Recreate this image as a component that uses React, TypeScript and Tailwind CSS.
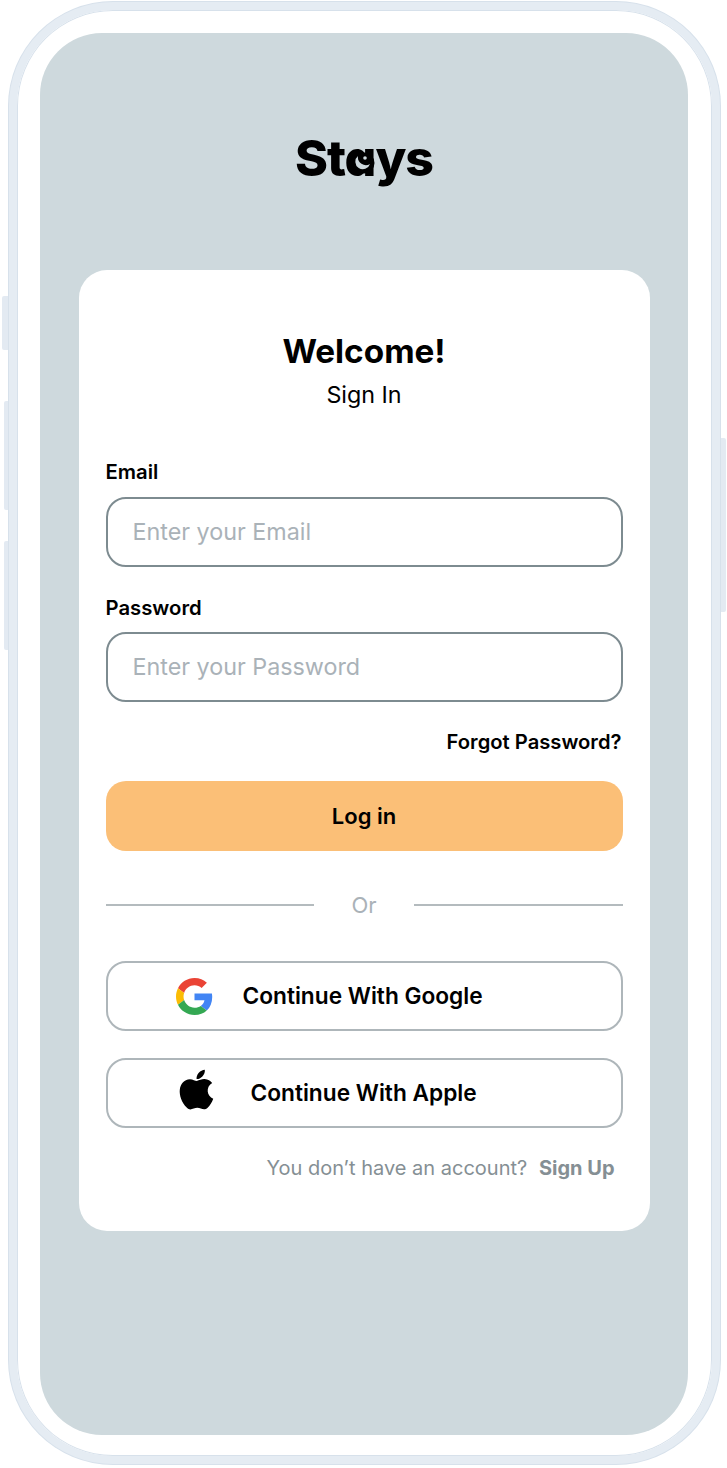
const SANS = "font-['Inter','Liberation_Sans',sans-serif]";

function GoogleIcon() {
  return (
    <svg width="37" height="37" viewBox="0 0 48 48">
      <path fill="#EA4335" d="M24 9.5c3.54 0 6.71 1.22 9.21 3.6l6.85-6.85C35.9 2.38 30.47 0 24 0 14.62 0 6.51 5.38 2.56 13.22l7.98 6.19C12.43 13.72 17.74 9.5 24 9.5z" />
      <path fill="#4285F4" d="M46.98 24.55c0-1.57-.15-3.09-.38-4.55H24v9.02h12.94c-.58 2.96-2.26 5.48-4.78 7.18l7.73 6c4.51-4.18 7.09-10.36 7.09-17.65z" />
      <path fill="#FBBC05" d="M10.53 28.59c-.48-1.45-.76-2.99-.76-4.59s.27-3.14.76-4.59l-7.98-6.19C.92 16.46 0 20.12 0 24c0 3.88.92 7.54 2.56 10.78l7.97-6.19z" />
      <path fill="#34A853" d="M24 48c6.48 0 11.93-2.13 15.89-5.81l-7.73-6c-2.15 1.45-4.92 2.3-8.16 2.3-6.26 0-11.57-4.22-13.47-9.91l-7.98 6.19C6.51 42.62 14.62 48 24 48z" />
    </svg>
  );
}

function AppleIcon() {
  return (
    <svg width="53" height="53" viewBox="0 0 24 24" fill="#000">
      <path d="M17.05 20.28c-.98.95-2.05.8-3.08.35-1.09-.46-2.09-.48-3.24 0-1.44.62-2.2.44-3.06-.35C2.79 15.25 3.51 7.59 9.05 7.31c1.35.07 2.29.74 3.08.8 1.18-.24 2.31-.93 3.57-.84 1.51.12 2.65.72 3.4 1.8-3.12 1.87-2.38 5.98.48 7.13-.57 1.5-1.31 2.99-2.54 4.09zM12.03 7.25c-.15-2.23 1.66-4.07 3.74-4.25.29 2.58-2.34 4.5-3.74 4.25z" />
    </svg>
  );
}

function Field({ label, placeholder, labelGap }: { label: string; placeholder: string; labelGap: string }) {
  return (
    <div>
      <div className={`${labelGap} text-[20.3px] leading-[23px] font-semibold text-black`}>{label}</div>
      <div className="flex h-[70px] items-center rounded-[20px] border-2 border-[#7d8b90] pl-[25px] text-[23.3px] text-[#aab2b8]">
        {placeholder}
      </div>
    </div>
  );
}

function SocialButton({ icon, label, iconW, gap }: { icon: React.ReactNode; label: string; iconW: string; gap: string }) {
  return (
    <div className="flex h-[70px] items-center rounded-[20px] border-2 border-[#aeb6ba] text-[22.7px] font-semibold text-black">
      <div className={iconW}>{icon}</div>
      <span className={`${gap} pt-[1px]`}>{label}</span>
    </div>
  );
}

export default function App() {
  return (
    <div className={`relative h-[1468px] w-[727px] overflow-hidden bg-white pt-[2px] pl-[9px] ${SANS}`}>
      {/* side buttons */}
      <div className="absolute top-[296px] left-[2px] h-[54px] w-[6px] rounded-l-[2px] bg-[#e3eaf2]" />
      <div className="absolute top-[401px] left-[4px] h-[109px] w-[4px] rounded-l-[2px] bg-[#e3eaf2]" />
      <div className="absolute top-[541px] left-[4px] h-[109px] w-[4px] rounded-l-[2px] bg-[#e3eaf2]" />
      <div className="absolute top-[438px] left-[721px] h-[174px] w-[5px] rounded-r-[2px] bg-[#e3eaf2]" />

      <div className="h-[1462px] w-[711px] rounded-[104px] border-[8px] border-[#e5ecf3] bg-white px-[23px] pt-[23px] shadow-[0_0_0_1px_#d7e1eb,inset_0_0_0_1px_#d7e1eb]">
        <div className="flex h-[1402px] w-[648px] flex-col items-center rounded-[62px] bg-[#ced9dd]">
          <div className="relative mt-[91px] text-[50px] leading-[68px] font-extrabold tracking-[-1px] text-black [font-feature-settings:'cv11']">
            Stays
            {/* moon cut into the a's bowl */}
            <svg className="absolute top-[26px] left-[56px]" width="24" height="26" viewBox="0 0 24 26">
              <circle cx="13" cy="13" r="10.5" fill="#000" />
              <path fill="#ced9dd" d="M7 6A7.5 7.5 0 1 0 19 14A8 8 0 0 1 7 6z" />
              <circle cx="14" cy="8" r="1.8" fill="#ced9dd" />
            </svg>
          </div>

          <div className="mt-[78px] h-[961px] w-[571px] rounded-[28px] bg-white px-[27px] pt-[62px]">
            <div className="text-center text-[33.3px] leading-[39px] font-bold text-black">Welcome!</div>
            <div className="mt-[10px] text-center text-[23.3px] leading-[28px] text-black">Sign In</div>

            <div className="mt-[51px] flex flex-col gap-[29px]">
              <Field label="Email" placeholder="Enter your Email" labelGap="mb-[14px]" />
              <Field label="Password" placeholder="Enter your Password" labelGap="mb-[13px]" />
            </div>

            <div className="mt-[29px] pr-[1px] text-right text-[20.2px] leading-[22px] font-semibold text-black">Forgot Password?</div>

            <div className="mt-[28px] flex h-[70px] items-center justify-center rounded-[20px] bg-[#fbbf77] text-[22px] font-semibold text-black">
              Log in
            </div>

            <div className="mt-[39px] flex items-center">
              <div className="h-[2px] flex-1 bg-[#b4bbbe]" />
              <span className="w-[100px] text-center text-[22px] leading-[30px] text-[#aab2b8]">Or</span>
              <div className="h-[2px] flex-1 bg-[#b4bbbe]" />
            </div>

            <div className="mt-[41px] flex flex-col gap-[27px]">
              <SocialButton icon={<GoogleIcon />} label="Continue With Google" iconW="ml-[68px] w-[37px]" gap="ml-[30px]" />
              <SocialButton icon={<AppleIcon />} label="Continue With Apple" iconW="ml-[62px] mb-[8px] w-[53px]" gap="ml-[28px]" />
            </div>

            <div className="mt-[27px] pr-[8px] text-right text-[20px] leading-[26px] text-[#858f94]">
              You don’t have an account? <span className="ml-[6px] font-bold">Sign Up</span>
            </div>
          </div>
        </div>
      </div>
    </div>
  );
}
